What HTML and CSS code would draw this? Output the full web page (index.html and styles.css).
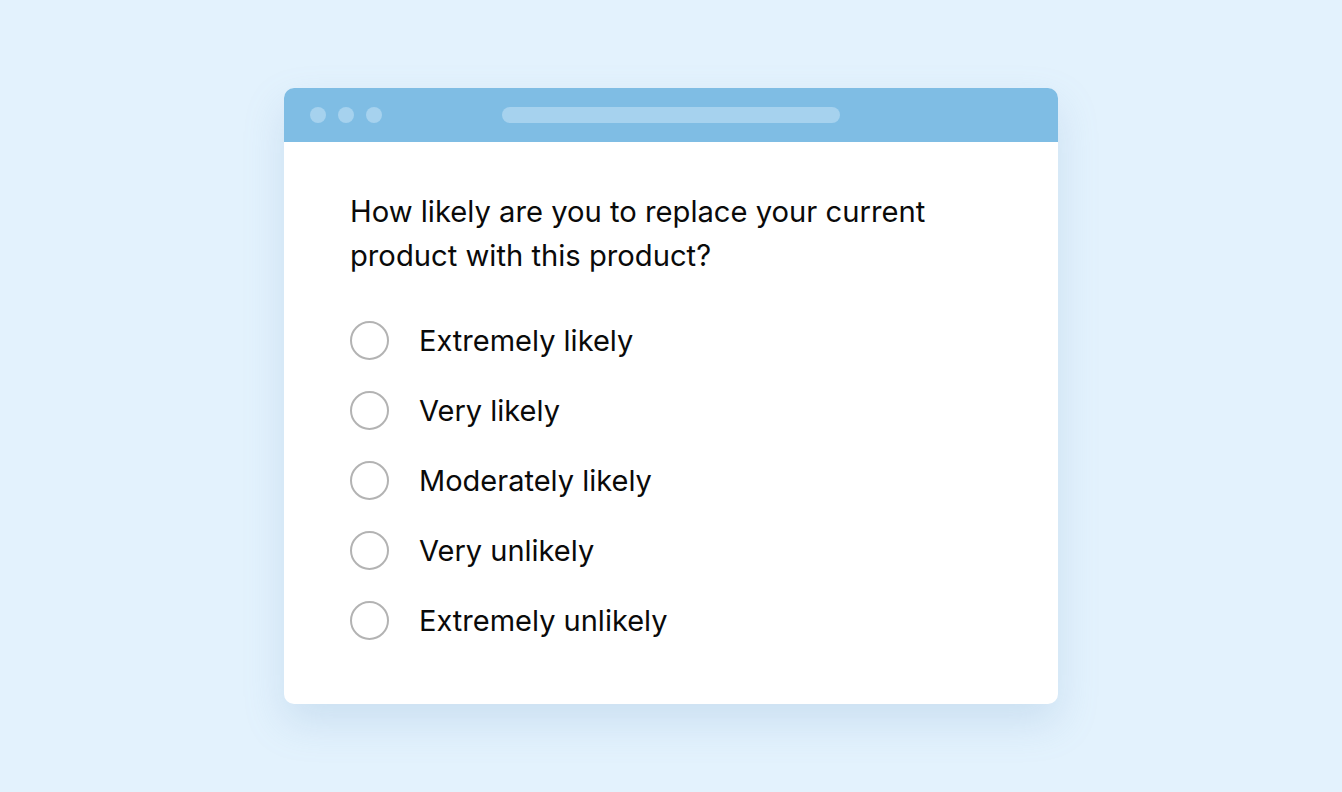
FILE: index.html
```html
<!DOCTYPE html>
<html lang="en">
<head>
<meta charset="utf-8">
<title>Survey</title>
<link rel="stylesheet" href="styles.css">
</head>
<body>
<div class="stage">
  <div class="window">
    <div class="titlebar">
      <div class="dots"><span class="dot"></span><span class="dot"></span><span class="dot"></span></div>
      <div class="address"></div>
    </div>
    <div class="content">
      <p class="question">How likely are you to replace your current product with this product?</p>
      <ul class="options">
        <li class="option"><span class="radio"></span><span class="label">Extremely likely</span></li>
        <li class="option"><span class="radio"></span><span class="label">Very likely</span></li>
        <li class="option"><span class="radio"></span><span class="label">Moderately likely</span></li>
        <li class="option"><span class="radio"></span><span class="label">Very unlikely</span></li>
        <li class="option"><span class="radio"></span><span class="label">Extremely unlikely</span></li>
      </ul>
    </div>
  </div>
</div>
</body>
</html>
```

FILE: styles.css
```css
html, body {
  margin: 0;
  padding: 0;
}
body {
  background: #e3f2fd;
  font-family: "Inter", "Noto Sans", sans-serif;
  color: #0a0a0a;
}
.stage {
  width: 1342px;
  height: 792px;
  padding-top: 88px;
  padding-left: 284px;
  box-sizing: border-box;
}
.window {
  width: 774px;
  height: 616px;
  background: #fff;
  border-radius: 10px;
  overflow: hidden;
  box-shadow: 0 18px 40px rgba(120, 160, 200, 0.22);
}
.titlebar {
  height: 54px;
  background: #7fbde4;
  display: flex;
  align-items: center;
}
.dots {
  display: flex;
  gap: 12px;
  padding-left: 26px;
}
.dot {
  width: 16px;
  height: 16px;
  border-radius: 50%;
  background: #a6d2ee;
}
.address {
  margin-left: 120px;
  width: 338px;
  height: 16px;
  border-radius: 8px;
  background: #a6d2ee;
}
.content {
  padding: 48px 66px 0 66px;
}
.question {
  margin: 0;
  font-size: 29.2px;
  line-height: 44px;
  width: 620px;
}
.options {
  list-style: none;
  margin: 43px 0 0 0;
  padding: 0;
  display: flex;
  flex-direction: column;
  gap: 31px;
}
.option {
  display: flex;
  align-items: center;
  height: 39px;
}
.radio {
  width: 35px;
  height: 35px;
  border: 2px solid #b3b3b3;
  border-radius: 50%;
  flex: none;
}
.label {
  margin-left: 30px;
  font-size: 29px;
}
```
